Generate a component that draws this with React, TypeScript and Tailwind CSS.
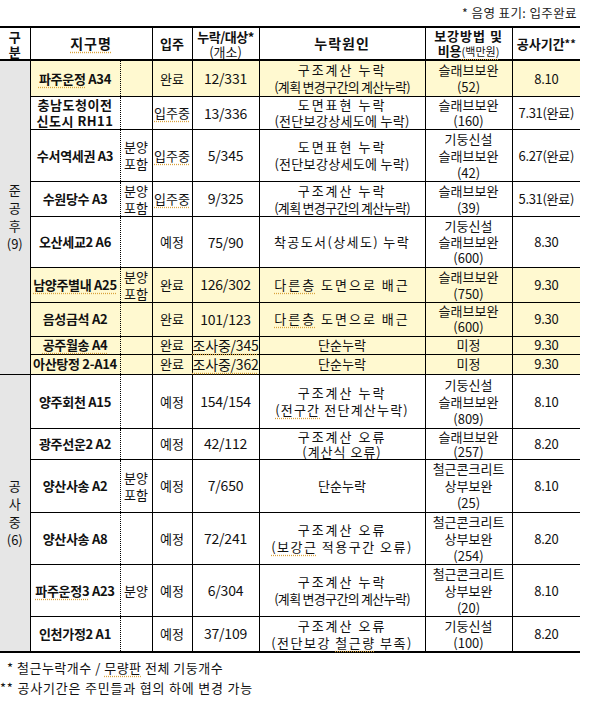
import React, { ReactNode } from "react";

const td = "border border-black p-0 text-center align-middle";
const U = "underline decoration-dotted decoration-[#d9a33c] underline-offset-[3px]";
const YEL = "bg-[#fff9d0]";

type Row = {
  h: string;
  y?: boolean;
  name: ReactNode;
  bun?: ReactNode;
  ip: ReactNode;
  cnt: ReactNode;
  cause: ReactNode;
  fix: ReactNode;
  per: ReactNode;
  lead?: string;
};

const Lines = ({ items }: { items: [string, string][] }) => (
  <>
    {items.map(([t, c], i) => (
      <div key={i} className={`whitespace-nowrap ${c}`}>
        {t}
      </div>
    ))}
  </>
);

const Bun = () => (
  <div className="leading-[17px]">
    <div>분양</div>
    <div>포함</div>
  </div>
);

const calcMiss: [string, string][] = [
  ["구조계산 누락", "tracking-[2px]"],
  ["(계획 변경구간의 계산누락)", "tracking-[-0.7px]"],
];
const drawMiss: [string, string][] = [
  ["도면표현 누락", "tracking-[2px]"],
  ["(전단보강상세도에 누락)", "tracking-[0.3px]"],
];

const rowsA: Row[] = [
  {
    h: "h-[36px]",
    y: true,
    name: (
      <span>
        <span className={U}>파주운정</span> A34
      </span>
    ),
    ip: "완료",
    cnt: "12/331",
    cause: <Lines items={calcMiss} />,
    fix: <Lines items={[["슬래브보완", ""], ["(52)", ""]]} />,
    per: "8.10",
  },
  {
    h: "h-[33px]",
    lead: "leading-[16px]",
    name: (
      <div className="leading-[16px] tracking-[0.5px]">
        <div>충남도청이전</div>
        <div>신도시 RH11</div>
      </div>
    ),
    ip: <span className={U}>입주중</span>,
    cnt: "13/336",
    cause: <Lines items={drawMiss} />,
    fix: <Lines items={[["슬래브보완", ""], ["(160)", ""]]} />,
    per: "7.31(완료)",
  },
  {
    h: "h-[52px]",
    name: "수서역세권 A3",
    bun: <Bun />,
    ip: <span className={U}>입주중</span>,
    cnt: "5/345",
    cause: <Lines items={drawMiss} />,
    fix: <Lines items={[["기둥신설", ""], ["슬래브보완", ""], ["(42)", ""]]} />,
    per: "6.27(완료)",
  },
  {
    h: "h-[35px]",
    name: "수원당수 A3",
    bun: <Bun />,
    ip: <span className={U}>입주중</span>,
    cnt: "9/325",
    cause: <Lines items={calcMiss} />,
    fix: <Lines items={[["슬래브보완", ""], ["(39)", ""]]} />,
    per: "5.31(완료)",
  },
  {
    h: "h-[51px]",
    lead: "leading-[16px]",
    name: "오산세교2 A6",
    ip: "예정",
    cnt: "75/90",
    cause: <Lines items={[["착공도서(상세도) 누락", "tracking-[1.4px]"]]} />,
    fix: <Lines items={[["기둥신설", ""], ["슬래브보완", ""], ["(600)", ""]]} />,
    per: "8.30",
  },
  {
    h: "h-[35px]",
    y: true,
    name: <span className={U}>남양주별내 A25</span>,
    bun: <Bun />,
    ip: "완료",
    cnt: "126/302",
    cause: (
      <div className="whitespace-nowrap tracking-[2px]">
        <span className={U}>다른층</span> 도면으로 배근
      </div>
    ),
    fix: <Lines items={[["슬래브보완", ""], ["(750)", ""]]} />,
    per: "9.30",
  },
  {
    h: "h-[34px]",
    y: true,
    lead: "leading-[16px]",
    name: "음성금석 A2",
    ip: "완료",
    cnt: "101/123",
    cause: (
      <div className="whitespace-nowrap tracking-[2px]">
        <span className={U}>다른층</span> 도면으로 배근
      </div>
    ),
    fix: <Lines items={[["슬래브보완", ""], ["(600)", ""]]} />,
    per: "9.30",
  },
  {
    h: "h-[18px]",
    y: true,
    lead: "leading-[16px]",
    name: <span className={U}>공주월송 A4</span>,
    ip: "완료",
    cnt: <span className={U}>조사중/345</span>,
    cause: "단순누락",
    fix: "미정",
    per: "9.30",
  },
  {
    h: "h-[20px]",
    y: true,
    lead: "leading-[16px]",
    name: "아산탕정 2-A14",
    ip: "완료",
    cnt: <span className={U}>조사중/362</span>,
    cause: "단순누락",
    fix: "미정",
    per: "9.30",
  },
];

const rowsB: Row[] = [
  {
    h: "h-[54px]",
    name: "양주회천 A15",
    ip: "예정",
    cnt: "154/154",
    cause: (
      <>
        <div className="whitespace-nowrap tracking-[2px]">구조계산 누락</div>
        <div className="whitespace-nowrap tracking-[1.2px]">
          <span className={U}>(전구간</span> 전단계산누락)
        </div>
      </>
    ),
    fix: <Lines items={[["기둥신설", ""], ["슬래브보완", ""], ["(809)", ""]]} />,
    per: "8.10",
  },
  {
    h: "h-[31px]",
    lead: "leading-[15px]",
    name: "광주선운2 A2",
    ip: "예정",
    cnt: "42/112",
    cause: (
      <Lines
        items={[
          ["구조계산 오류", "tracking-[2px]"],
          ["(계산식 오류)", "tracking-[1px]"],
        ]}
      />
    ),
    fix: <Lines items={[["슬래브보완", ""], ["(257)", ""]]} />,
    per: "8.20",
  },
  {
    h: "h-[53px]",
    name: "양산사송 A2",
    bun: <Bun />,
    ip: "예정",
    cnt: "7/650",
    cause: "단순누락",
    fix: <Lines items={[["철근콘크리트", ""], ["상부보완", ""], ["(25)", ""]]} />,
    per: "8.10",
  },
  {
    h: "h-[52px]",
    name: "양산사송 A8",
    ip: "예정",
    cnt: "72/241",
    cause: (
      <>
        <div className="whitespace-nowrap tracking-[2px]">구조계산 오류</div>
        <div className="whitespace-nowrap tracking-[1.5px]">
          <span className={U}>(보강근</span> 적용구간 오류)
        </div>
      </>
    ),
    fix: <Lines items={[["철근콘크리트", ""], ["상부보완", ""], ["(254)", ""]]} />,
    per: "8.20",
  },
  {
    h: "h-[52px]",
    name: (
      <span>
        <span className={U}>파주운정3</span> A23
      </span>
    ),
    bun: <div>분양</div>,
    ip: "예정",
    cnt: "6/304",
    cause: <Lines items={calcMiss} />,
    fix: <Lines items={[["철근콘크리트", ""], ["상부보완", ""], ["(20)", ""]]} />,
    per: "8.10",
  },
  {
    h: "h-[35px]",
    name: "인천가정2 A1",
    ip: "예정",
    cnt: "37/109",
    cause: (
      <>
        <div className="whitespace-nowrap tracking-[2px]">구조계산 오류</div>
        <div className="whitespace-nowrap tracking-[1.5px]">
          (전단보강 <span className={U}>철근량</span> 부족)
        </div>
      </>
    ),
    fix: <Lines items={[["기둥신설", ""], ["(100)", ""]]} />,
    per: "8.20",
  },
];

function Group({
  rows,
  label,
  last,
}: {
  rows: Row[];
  label: string[];
  last?: boolean;
}) {
  return (
    <>
      {rows.map((r, i) => {
        const isLast = last && i === rows.length - 1;
        const bb = isLast ? "border-b-2" : "";
        return (
          <tr key={i} className={`${r.h} ${r.y ? YEL : ""} ${r.lead ?? "leading-[17px]"}`}>
            {i === 0 && (
              <td
                rowSpan={rows.length}
                className={`${td} border-l-0 bg-[#e6e6e6] ${last ? "border-b-2" : ""}`}
              >
                <div className="flex flex-col items-center leading-[18px]">
                  {label.map((l, k) => (
                    <div key={k}>{l}</div>
                  ))}
                </div>
              </td>
            )}
            <td className={`${td} ${bb} font-bold whitespace-nowrap tracking-[-0.3px] [border-right-style:dotted]`}>
              {r.name}
            </td>
            <td className={`${td} ${bb} [border-left-style:dotted]`}>{r.bun}</td>
            <td className={`${td} ${bb}`}>{r.ip}</td>
            <td className={`${td} ${bb} text-[14px] tracking-[-0.2px] whitespace-nowrap`}>{r.cnt}</td>
            <td className={`${td} ${bb}`}>{r.cause}</td>
            <td className={`${td} ${bb}`}>{r.fix}</td>
            <td className={`${td} ${bb} border-r-0 whitespace-nowrap tracking-[-0.3px]`}>{r.per}</td>
          </tr>
        );
      })}
    </>
  );
}

export default function App() {
  return (
    <div className="w-[590px] h-[708px] bg-white text-[#111] font-['Noto_Sans_CJK_KR',sans-serif] text-[13px] overflow-hidden">
      <div className="h-[26px] flex items-center justify-end pr-[13px] text-[12.5px] tracking-[0.4px] text-[#222]">
        * 음영 표기: 입주완료
      </div>
      <table className="table-fixed border-collapse w-[580px]">
        <colgroup>
          <col className="w-[30px]" />
          <col className="w-[90px]" />
          <col className="w-[32px]" />
          <col className="w-[40px]" />
          <col className="w-[67px]" />
          <col className="w-[166px]" />
          <col className="w-[87px]" />
          <col className="w-[68px]" />
        </colgroup>
        <thead>
          <tr className="h-[33px] leading-[15px] font-bold">
            <td className={`${td} border-l-0 border-t-2 border-b-2`}>
              <div>구</div>
              <div>분</div>
            </td>
            <td colSpan={2} className={`${td} border-t-2 border-b-2 text-[14px] tracking-[1px]`}>
              <span className={U}>지구명</span>
            </td>
            <td className={`${td} border-t-2 border-b-2`}>입주</td>
            <td className={`${td} border-t-2 border-b-2`}>
              <div className="tracking-[-0.5px]">누락/대상*</div>
              <div className="font-normal">(개소)</div>
            </td>
            <td className={`${td} border-t-2 border-b-2 text-[14px] tracking-[1px]`}>누락원인</td>
            <td className={`${td} border-t-2 border-b-2`}>
              <div className="tracking-[1px] whitespace-nowrap">보강방법 및</div>
              <div className="whitespace-nowrap">
                비용<span className={`font-normal text-[11px] ${U}`}>(백만원)</span>
              </div>
            </td>
            <td className={`${td} border-t-2 border-b-2 border-r-0 whitespace-nowrap`}>
              공사기간<span className="text-[11px] align-top">**</span>
            </td>
          </tr>
        </thead>
        <tbody>
          <Group rows={rowsA} label={["준", "공", "후", "(9)"]} />
          <Group rows={rowsB} label={["공", "사", "중", "(6)"]} last />
        </tbody>
      </table>
      <div className="mt-[5px] text-[13px] leading-[20px]">
        <div className="pl-[7px] tracking-[0.5px]">
          * 철근누락개수 / <span className={U}>무량판</span> 전체 기둥개수
        </div>
        <div className="tracking-[0.8px]">** 공사기간은 주민들과 협의 하에 변경 가능</div>
      </div>
    </div>
  );
}
